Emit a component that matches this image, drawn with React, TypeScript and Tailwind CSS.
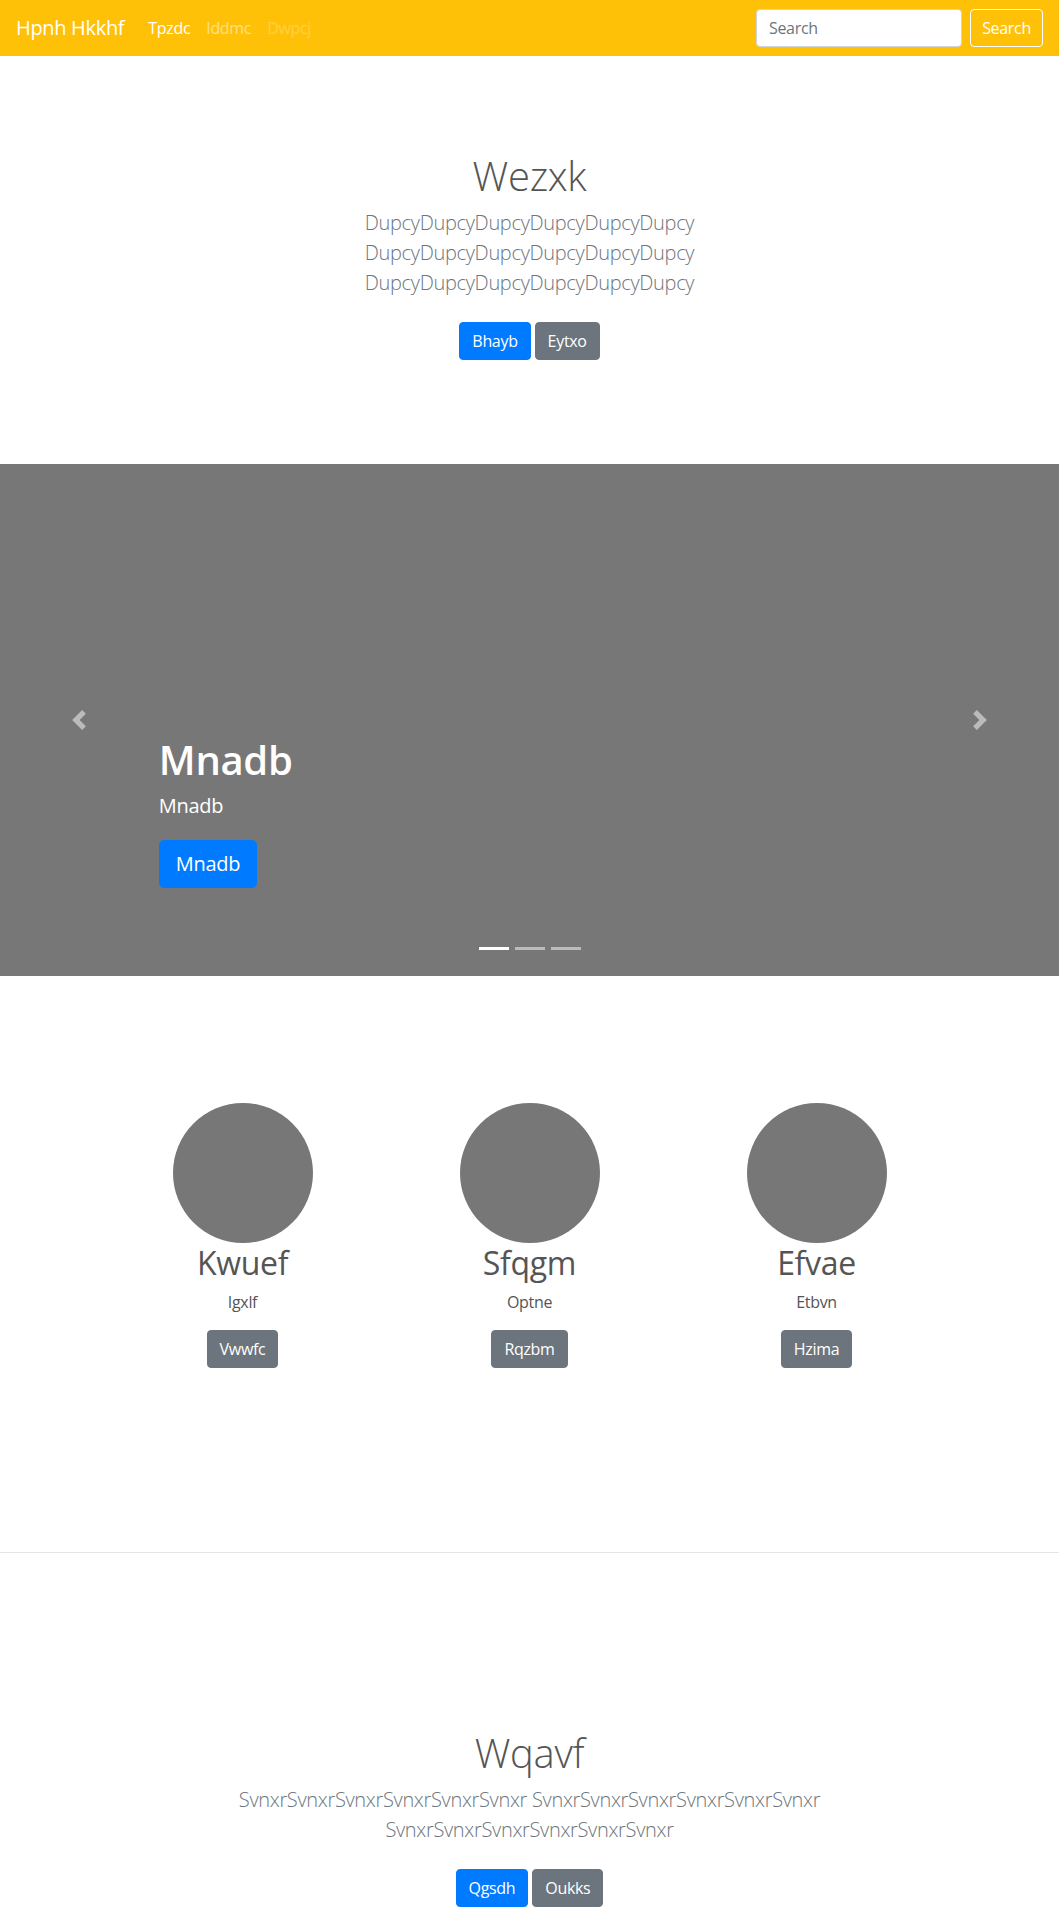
import React from "react";

const FONT = "font-['Open_Sans','Noto_Sans',sans-serif]";

const FEATURES = [
  { title: "Kwuef", text: "Igxlf", cta: "Vwwfc" },
  { title: "Sfqgm", text: "Optne", cta: "Rqzbm" },
  { title: "Efvae", text: "Etbvn", cta: "Hzima" },
];

function Btn({
  children,
  variant,
}: {
  children: React.ReactNode;
  variant: "primary" | "secondary";
}) {
  return (
    <a
      href="#"
      className={`inline-block rounded-[4px] border px-3 py-[6px] text-[16px] leading-6 text-white ${
        variant === "primary"
          ? "border-[#007bff] bg-[#007bff]"
          : "border-[#6c757d] bg-[#6c757d]"
      }`}
    >
      {children}
    </a>
  );
}

function Chevron({ dir }: { dir: "prev" | "next" }) {
  return (
    <svg width="20" height="20" viewBox="0 0 8 8" fill="#fff" className="opacity-50">
      {dir === "prev" ? (
        <path d="M5.25 0l-4 4 4 4 1.5-1.5L4.25 4l2.5-2.5L5.25 0z" />
      ) : (
        <path d="M2.75 0l-1.5 1.5L3.75 4l-2.5 2.5L2.75 8l4-4-4-4z" />
      )}
    </svg>
  );
}

export default function App() {
  const dupcy = "DupcyDupcyDupcyDupcyDupcyDupcy";
  const svnxr = "SvnxrSvnxrSvnxrSvnxrSvnxrSvnxr";

  return (
    <div className={`${FONT} bg-white tracking-[-0.02em] text-[#555]`}>
      {/* navbar */}
      <nav className="flex h-14 items-center bg-[#ffc107] px-4">
        <a href="#" className="mr-4 py-[5px] text-[20px] leading-[30px] text-white">
          Hpnh Hkkhf
        </a>
        <ul className="flex text-[16px] leading-6">
          <li>
            <a href="#" className="block px-2 py-2 text-white">Tpzdc</a>
          </li>
          <li>
            <a href="#" className="block px-2 py-2 text-white/50">Iddmc</a>
          </li>
          <li>
            <a href="#" className="block px-2 py-2 text-white/25">Dwpcj</a>
          </li>
        </ul>
        <form className="ml-auto flex items-center gap-2">
          <input
            type="search"
            placeholder="Search"
            className="h-[38px] w-[206px] rounded-[4px] border border-[#ced4da] bg-white px-3 text-[16px] text-[#495057] outline-none placeholder:text-[#6c757d]"
          />
          <button
            type="button"
            className="h-[38px] w-[73px] rounded-[4px] border border-white text-[16px] text-white"
          >
            Search
          </button>
        </form>
      </nav>

      {/* hero */}
      <section className="pt-[96px] pb-[104px] text-center">
        <div className="mx-auto max-w-[450px]">
          <h1 className="mb-2 text-[40px] leading-[48px] font-light">Wezxk</h1>
          <p className="text-[20px] leading-[30px] font-light text-[#6c757d]">
            {dupcy} {dupcy} {dupcy}
          </p>
          <p className="mt-6 flex justify-center gap-1">
            <Btn variant="primary">Bhayb</Btn>
            <Btn variant="secondary">Eytxo</Btn>
          </p>
        </div>
      </section>

      {/* carousel */}
      <div className="relative h-[512px] bg-[#777]">
        <div className="absolute top-[272px] left-[15%] right-[15%] text-white">
          <h1 className="mb-2 text-[40px] leading-[48px] font-semibold">Mnadb</h1>
          <p className="mb-5 text-[20px] leading-[28px]">Mnadb</p>
          <a
            href="#"
            className="inline-block rounded-[5px] border border-[#007bff] bg-[#007bff] px-4 py-2 text-[20px] leading-[30px] text-white"
          >
            Mnadb
          </a>
        </div>
        <a href="#" className="absolute inset-y-0 left-0 flex w-[15%] items-center justify-center">
          <Chevron dir="prev" />
        </a>
        <a href="#" className="absolute inset-y-0 right-0 flex w-[15%] items-center justify-center">
          <Chevron dir="next" />
        </a>
        <ol className="absolute bottom-[26px] left-[15%] right-[15%] flex justify-center gap-[6px]">
          <li className="h-[3px] w-[30px] bg-white" />
          <li className="h-[3px] w-[30px] bg-white/50" />
          <li className="h-[3px] w-[30px] bg-white/50" />
        </ol>
      </div>

      {/* features */}
      <div className="mx-auto grid w-[861px] grid-cols-3 pt-[127px] pb-[184px] text-center">
        {FEATURES.map((f) => (
          <div key={f.title} className="flex flex-col items-center">
            <svg width="140" height="140" className="block">
              <circle cx="70" cy="70" r="70" fill="#777" />
            </svg>
            <h2 className="mt-px mb-2 text-[32px] leading-[38px]">{f.title}</h2>
            <p className="mb-4 text-[16px] leading-6">{f.text}</p>
            <Btn variant="secondary">{f.cta}</Btn>
          </div>
        ))}
      </div>

      <hr className="border-t border-black/10" />

      {/* bottom hero */}
      <section className="pt-[176px] pb-[20px] text-center">
        <div className="mx-auto max-w-[620px]">
          <h1 className="mb-2 text-[40px] leading-[48px] font-light">Wqavf</h1>
          <p className="text-[20px] leading-[30px] font-light text-[#6c757d]">
            {svnxr} {svnxr} {svnxr}
          </p>
          <p className="mt-6 flex justify-center gap-1">
            <Btn variant="primary">Qgsdh</Btn>
            <Btn variant="secondary">Oukks</Btn>
          </p>
        </div>
      </section>
    </div>
  );
}
